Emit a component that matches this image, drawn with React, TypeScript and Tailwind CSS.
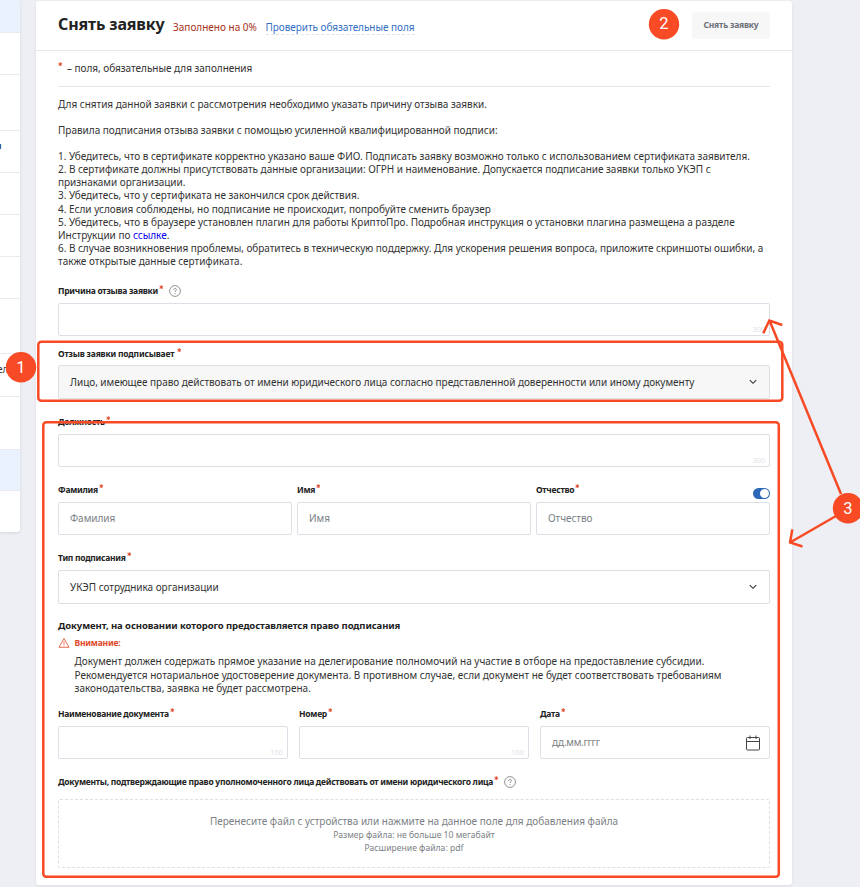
import React from "react";

type FieldProps = { text: string; className?: string; star?: string; children?: React.ReactNode };

function Star({ className = "" }: { className?: string }) {
  return (
    <svg viewBox="0 0 10 10" className={`h-[4.5px] w-[4.5px] shrink-0 text-[#e0482a] ${className}`} stroke="currentColor" strokeWidth="2.2">
      <path d="M5 .5v9M1.2 2.8l7.6 4.4M8.8 2.8l-7.6 4.4" />
    </svg>
  );
}

function Label({ text, className = "tracking-[-0.27px]", star = "ml-[1px]", children }: FieldProps) {
  return (
    <div className="flex h-4 items-center whitespace-nowrap">
      <span className={`text-[8.5px] font-bold text-[#222] ${className}`}>{text}</span>
      <Star className={`mb-[8px] ${star}`} />
      {children}
    </div>
  );
}

function Help() {
  return (
    <svg viewBox="0 0 12 12" className="ml-[5px] h-3 w-3 shrink-0" fill="none" stroke="#777" strokeWidth="0.8">
      <circle cx="6" cy="6" r="5.4" />
      <path d="M4.6 4.9c0-1.9 2.8-1.8 2.8-.2 0 1-1.4 1.1-1.4 2.3M6 8v.9" />
    </svg>
  );
}

function Input({ placeholder, count, className = "" }: { placeholder?: string; count?: string; className?: string }) {
  return (
    <div className={`flex h-[33px] justify-between rounded-[2px] border border-[#dddfe6] bg-white pr-1 pl-[11px] ${className}`}>
      <span className="self-center text-[10px] tracking-[-0.05px] text-[#7b7f85]">{placeholder}</span>
      {count && <span className="self-end text-[7.5px] leading-[12px] text-[#dfe1e7]">{count}</span>}
    </div>
  );
}

function Chevron() {
  return (
    <svg viewBox="0 0 8 6" className="h-[6px] w-2" fill="none" stroke="#333" strokeWidth="1.1">
      <path d="M.8 1.2 4 4.3l3.2-3.1" />
    </svg>
  );
}

const paragraphs = [
  { text: "Для снятия данной заявки с рассмотрения необходимо указать причину отзыва заявки.", cls: "tracking-[-0.02px]" },
  { text: "", cls: "" },
  { text: "Правила подписания отзыва заявки с помощью усиленной квалифицированной подписи:", cls: "tracking-[-0.01px]" },
  { text: "", cls: "" },
  { text: "1. Убедитесь, что в сертификате корректно указано ваше ФИО. Подписать заявку возможно только с использованием сертификата заявителя.", cls: "tracking-[-0.015px]" },
  { text: "2. В сертификате должны присутствовать данные организации: ОГРН и наименование. Допускается подписание заявки только УКЭП с", cls: "tracking-[-0.03px]" },
  { text: "признаками организации.", cls: "tracking-[-0.03px]" },
  { text: "3. Убедитесь, что у сертификата не закончился срок действия.", cls: "tracking-[-0.02px]" },
  { text: "4. Если условия соблюдены, но подписание не происходит, попробуйте сменить браузер", cls: "tracking-[0px]" },
  { text: "5. Убедитесь, что в браузере установлен плагин для работы КриптоПро. Подробная инструкция о установки плагина размещена а разделе", cls: "tracking-[-0.015px]" },
  { text: "Инструкции по ", link: "ссылке", cls: "tracking-[-0.02px]" },
  { text: "6. В случае возникновения проблемы, обратитесь в техническую поддержку. Для ускорения решения вопроса, приложите скриншоты ошибки, а", cls: "tracking-[-0.033px]" },
  { text: "также открытые данные сертификата.", cls: "tracking-[-0.01px]" },
];

function Sidebar() {
  const row = "box-border w-full shrink-0 border-b border-[#e8eaf0]";
  return (
    <aside className="flex h-[532px] w-[19.5px] shrink-0 flex-col overflow-hidden rounded-br-[3px] bg-white text-[10px] text-[#333] shadow-[0_1px_3px_rgba(60,70,100,0.14)]">
      <div className={`${row} h-[33px] bg-[#eaf2fe]`} />
      <div className={`${row} h-[42px]`} />
      <div className={`${row} h-[56px]`} />
      <div className={`${row} h-[42px]`}>
        <div className="-ml-[4px] pt-[8px] text-[9px] leading-[14px] font-bold">я</div>
      </div>
      <div className={`${row} h-[42px]`} />
      <div className={`${row} h-[42px]`} />
      <div className={`${row} h-[42px]`} />
      <div className={`${row} h-[55px]`} />
      <div className={`${row} h-[43px]`}>
        <div className="-ml-[3px] pt-[8px] leading-[14px]">ел</div>
      </div>
      <div className={`${row} h-[53px]`} />
      <div className={`${row} h-[41px] bg-[#eaf2fe]`} />
      <div className="flex-1" />
    </aside>
  );
}

function Annotations() {
  return (
    <svg className="pointer-events-none absolute inset-0 h-[887px] w-[860px]" viewBox="0 0 860 887" fill="none" stroke="#f74a25" strokeWidth="2.5">
      <rect x="38.3" y="341.8" width="744" height="59" rx="3" />
      <rect x="43.3" y="422.3" width="735.5" height="454.5" rx="3" />
      <path d="M841 494 769.5 320.5M763.3 333.2l6-12.7 13 4.5M836 516 790 542.5M792.3 529.4l-2.3 13.1 12.5 4" />
      <g fill="#f74a25" stroke="none">
        <circle cx="21" cy="367.3" r="15.2" />
        <circle cx="664" cy="24.3" r="15.2" />
        <circle cx="848" cy="508.3" r="15.2" />
      </g>
      <g fill="#fff" stroke="none" fontFamily="Roboto, sans-serif" fontSize="16.5" textAnchor="middle">
        <text x="21" y="372.6">1</text>
        <text x="664" y="29.4">2</text>
        <text x="848" y="513.6">3</text>
      </g>
    </svg>
  );
}

export default function App() {
  return (
    <div className="relative flex h-[887px] w-[860px] overflow-hidden bg-[#edeff4] font-['Noto_Sans',sans-serif]">
      <Sidebar />
      <main className="mt-px ml-[16.5px] flex h-[883.5px] w-[756px] shrink-0 flex-col rounded-[3px] bg-white shadow-[0_1px_3px_rgba(60,70,100,0.1)]">
        <header className="flex h-[50px] shrink-0 items-center border-b border-[#e5e7ed] px-[22px] whitespace-nowrap">
          <h1 className="mb-[3px] w-[107px] text-[16px] font-bold tracking-[-0.15px] text-[#222]">Снять заявку</h1>
          <span className="mt-[4px] ml-[8px] w-[84.5px] text-[10px] text-[#a8331c]">Заполнено на 0%</span>
          <span className="mt-[5px] ml-[8px] w-[149px] border-b border-dashed border-[#e0e3e8] text-[10px] leading-[13px] tracking-[-0.05px] text-[#3470c4]">Проверить обязательные поля</span>
          <button className="ml-auto flex h-[27px] w-[78px] items-center justify-center rounded-[3px] bg-[#f7f7f8] text-[8.5px] font-bold tracking-[-0.2px] text-[#6d7278]">Снять заявку</button>
        </header>
        <div className="flex flex-1 flex-col px-[22px]">
          <div className="flex h-[36px] shrink-0 items-center border-b border-[#e2e5ec] text-[10px] whitespace-nowrap text-[#333]">
            <Star className="mb-[9px]" />
            <span className="ml-[4.5px] tracking-[-0.03px]">– поля, обязательные для заполнения</span>
          </div>
          <div className="mt-[10.5px] h-[170.5px] shrink-0 text-[10px] leading-[13.14px] whitespace-nowrap text-[#333]">
            {paragraphs.map((p, i) => (
              <p key={i} className={`h-[13.14px] ${p.cls}`}>
                {p.text}
                {p.link && <><span className="text-[#0a00ee]">{p.link}</span>.</>}
              </p>
            ))}
          </div>

          <div className="mt-[15px]"><Label text="Причина отзыва заявки"><Help /></Label></div>
          <Input count="300" className="mt-[4px]" />

          <div className="mt-[10px]"><Label text="Отзыв заявки подписывает" className="tracking-[-0.2px]" star="ml-[3px]" /></div>
          <div className="mt-[3px] flex h-[34px] items-center justify-between rounded-[2px] border border-[#dddfe6] bg-[#f7f7f7] pr-3 pl-[11px] text-[10px] whitespace-nowrap text-[#333]">
            <span className="tracking-[-0.03px]">Лицо, имеющее право действовать от имени юридического лица согласно представленной доверенности или иному документу</span>
            <Chevron />
          </div>

          <div className="mt-[15px]"><Label text="Должность" /></div>
          <Input count="300" className="mt-[4px]" />

          <div className="mt-[15px] grid grid-cols-3 gap-[5px]">
            <div><Label text="Фамилия" /><Input placeholder="Фамилия" className="mt-[4px]" /></div>
            <div><Label text="Имя" /><Input placeholder="Имя" className="mt-[4px]" /></div>
            <div>
              <div className="flex justify-between">
                <Label text="Отчество" />
                <span className="mt-[6px] flex h-[11px] w-[17px] items-center justify-end rounded-full bg-[#2c68b8] p-[1px]">
                  <span className="h-[9px] w-[9px] rounded-full bg-white" />
                </span>
              </div>
              <Input placeholder="Отчество" className="mt-[3px]" />
            </div>
          </div>

          <div className="mt-[15px]"><Label text="Тип подписания" /></div>
          <div className="mt-[4px] flex h-[34px] items-center justify-between rounded-[2px] border border-[#dddfe6] pr-3 pl-[11px] text-[10px] text-[#333]">
            <span className="tracking-[-0.03px]">УКЭП сотрудника организации</span>
            <Chevron />
          </div>

          <h2 className="mt-[14px] h-[15px] text-[9.5px] leading-[15px] font-bold tracking-[-0.09px] whitespace-nowrap text-[#222]">Документ, на основании которого предоставляется право подписания</h2>
          <div className="mt-[3px] flex h-[14px] items-center">
            <svg viewBox="0 0 12 12" className="h-3 w-3" fill="none" stroke="#e0482a" strokeWidth="0.8" strokeLinejoin="round">
              <path d="M6 1.5 11 10.3H1zM6 4.6v3M6 8.3v.9" />
            </svg>
            <span className="ml-[4.5px] text-[8.5px] font-bold tracking-[-0.2px] text-[#e0482a]">Внимание:</span>
          </div>
          <div className="mt-[5px] ml-[16.5px] h-[42px] text-[10px] leading-[13.7px] whitespace-nowrap text-[#333]">
            <p>Документ должен содержать прямое указание на делегирование полномочий на участие в отборе на предоставление субсидии.</p>
            <p className="tracking-[-0.01px]">Рекомендуется нотариальное удостоверение документа. В противном случае, если документ не будет соответствовать требованиям</p>
            <p>законодательства, заявка не будет рассмотрена.</p>
          </div>

          <div className="mt-[9px] grid grid-cols-3 gap-[11px]">
            <div><Label text="Наименование документа" /><Input count="100" className="mt-[4px]" /></div>
            <div><Label text="Номер" /><Input count="100" className="mt-[4px]" /></div>
            <div>
              <Label text="Дата" />
              <div className="mt-[4px] flex h-[33px] items-center justify-between rounded-[2px] border border-[#dddfe6] pr-[8px] pl-[11px] text-[10px] text-[#7b7f85]">
                <span className="tracking-[-0.3px]">дд.мм.гггг</span>
                <svg viewBox="0 0 16 16" className="h-4 w-4" fill="none" stroke="#444" strokeWidth="1">
                  <rect x="1.5" y="2.5" width="13" height="12.5" rx="1" />
                  <path d="M1.5 6.5h13M5 .5v3.5M11 .5v3.5" />
                </svg>
              </div>
            </div>
          </div>

          <div className="mt-[15px]"><Label text="Документы, подтверждающие право уполномоченного лица действовать от имени юридического лица"><Help /></Label></div>
          <div className="mt-[9px] flex h-[69px] flex-col items-center rounded-[2px] border border-dashed border-[#dddfe3] pt-[14px] whitespace-nowrap text-[#7b7f85]">
            <p className="text-[10px] leading-[15px]">Перенесите файл с устройства или нажмите на данное поле для добавления файла</p>
            <p className="text-[8.6px] leading-[13px]">Размер файла: не больше 10 мегабайт</p>
            <p className="text-[8.6px] leading-[13px]">Расширение файла: pdf</p>
          </div>
        </div>
      </main>
      <Annotations />
    </div>
  );
}
